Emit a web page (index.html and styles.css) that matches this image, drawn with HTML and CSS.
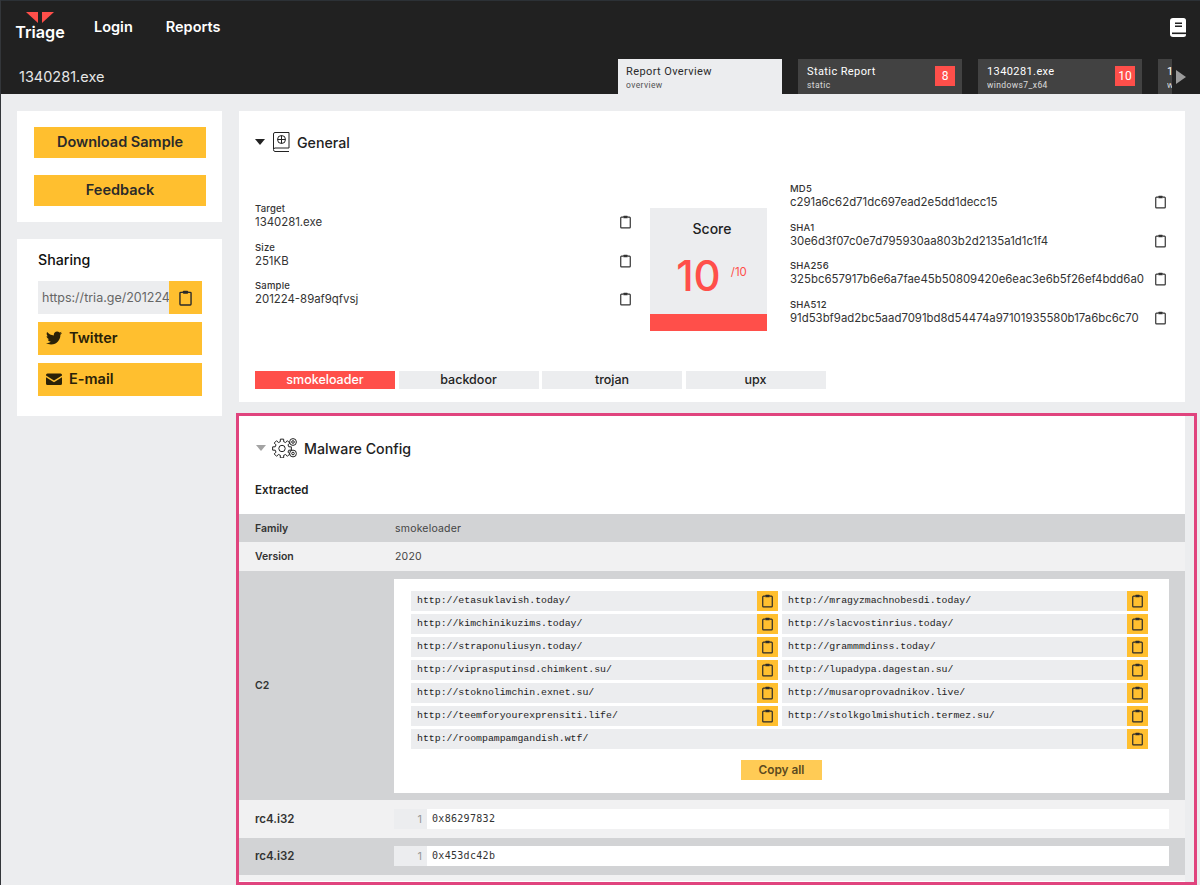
FILE: index.html
```html
<!doctype html>
<html lang="en">
    <head>
        <meta charset="UTF-8" />
        <meta name="viewport" content="width=device-width, initial-scale=1.0" />
        <title>1340281.exe - Triage</title>
        <link rel="stylesheet" href="styles.css">
    </head>
    <body>
        <svg class="icon-defs" width="0" height="0" aria-hidden="true">
            <symbol id="clip" viewBox="0 0 12 15">
                <path d="M3.6 2.2H1.6a.8.8 0 0 0-.8.8v10.2a.8.8 0 0 0 .8.8h8.8a.8.8 0 0 0 .8-.8V3a.8.8 0 0 0-.8-.8H8.4" fill="none" stroke="currentColor" stroke-width="1.3" />
                <rect x="3.6" y="0.6" width="4.8" height="2.9" rx="0.6" fill="currentColor" />
            </symbol>
        </svg>

        <header class="topbar">
            <div class="topbar-row">
                <a class="logo" href="#">
                    <svg class="logo-mark" width="28" height="11" viewBox="0 0 28 11">
                        <polygon points="0,0 12,0 12,11" fill="#ff4f4a" />
                        <polygon points="16,0 28,0 16,11" fill="#ff4f4a" />
                    </svg>
                    <span class="logo-text">Triage</span>
                </a>
                <a class="nav-link" href="#">Login</a>
                <a class="nav-link" href="#">Reports</a>
                <svg class="book-icon" width="16" height="19" viewBox="0 0 16 19">
                    <path d="M3 0h10.5A2.5 2.5 0 0 1 16 2.500V16.500A2.500 2.500 0 0 1 13.500 19H3A3 3 0 0 1 0 16V3A3 3 0 0 1 3 0z" fill="#fff" />
                    <rect x="5" y="4.500" width="7" height="1.500" fill="#212121" />
                    <rect x="5" y="7.500" width="7" height="1.500" fill="#212121" />
                    <rect x="2" y="14.500" width="14" height="1.600" fill="#212121" />
                </svg>
            </div>
            <div class="topbar-row tabs-row">
                <div class="file-name">1340281.exe</div>
                <div class="tabs">
                    <div class="tab active">
                        <div class="tab-title">Report Overview</div>
                        <div class="tab-sub">overview</div>
                    </div>
                    <div class="tab">
                        <div class="tab-title">Static Report</div>
                        <div class="tab-sub">static</div>
                        <span class="tab-badge">8</span>
                    </div>
                    <div class="tab">
                        <div class="tab-title">1340281.exe</div>
                        <div class="tab-sub">windows7_x64</div>
                        <span class="tab-badge">10</span>
                    </div>
                    <div class="tab">
                        <div class="tab-title">1340281.exe</div>
                        <div class="tab-sub">windows7_x64</div>
                    </div>
                </div>
                <div class="tabs-arrow"></div>
            </div>
        </header>

        <div class="page">
            <aside class="sidebar">
                <div class="card side-actions">
                    <button class="btn-yellow">Download Sample</button>
                    <button class="btn-yellow">Feedback</button>
                </div>
                <div class="card sharing">
                    <h3>Sharing</h3>
                    <div class="share-link">
                        <span class="share-url">https://tria.ge/201224-89af9qfvsj</span>
                        <span class="share-copy"><svg width="13" height="16"><use href="#clip" /></svg></span>
                    </div>
                    <a class="share-btn" href="#">
                        <svg width="16" height="16" viewBox="0 0 512 512"><path fill="currentColor" d="M459.37 151.716c.325 4.548.325 9.097.325 13.645 0 138.72-105.583 298.558-298.558 298.558-59.452 0-114.68-17.219-161.137-47.106 8.447.974 16.568 1.299 25.34 1.299 49.055 0 94.213-16.568 130.274-44.832-46.132-.975-84.792-31.188-98.112-72.772 6.498.974 12.995 1.624 19.818 1.624 9.421 0 18.843-1.3 27.614-3.573-48.081-9.747-84.143-51.98-84.143-102.985v-1.299c13.969 7.797 30.214 12.67 47.431 13.319-28.264-18.843-46.781-51.005-46.781-87.391 0-19.492 5.197-37.36 14.294-52.954 51.655 63.675 129.3 105.258 216.365 109.807-1.624-7.797-2.599-15.918-2.599-24.04 0-57.828 46.782-104.934 104.934-104.934 30.213 0 57.502 12.67 76.67 33.137 23.715-4.548 46.456-13.32 66.599-25.34-7.798 24.366-24.366 44.833-46.132 57.827 21.117-2.273 41.584-8.122 60.426-16.243-14.292 20.791-32.161 39.308-52.628 54.253z" /></svg>
                        Twitter
                    </a>
                    <a class="share-btn" href="#">
                        <svg width="16" height="16" viewBox="0 0 16 16"><path fill="currentColor" d="M1.500 2.500h13A1.500 1.500 0 0 1 16 4v.4L8 9.400 0 4.400V4a1.500 1.500 0 0 1 1.500-1.500zM0 6.200l8 5 8-5V12.500A1.500 1.500 0 0 1 14.500 14h-13A1.500 1.500 0 0 1 0 12.500z" /></svg>
                        E-mail
                    </a>
                </div>
            </aside>

            <main class="content">
                <section class="card general">
                    <div class="section-head">
                        <span class="caret"></span>
                        <svg class="section-icon" width="18" height="20" viewBox="0 0 18 20" fill="none" stroke="#222" stroke-width="1">
                            <path d="M1.500 17V2A1.500 1.500 0 0 1 3 .5h14v15.500H3A1.800 1.800 0 0 0 1.500 17.500 1.800 1.800 0 0 0 3 19.500h14" />
                            <circle cx="9.500" cy="7.500" r="4" />
                            <path d="M5.500 7.500h8M9.500 3.500v8" />
                        </svg>
                        <h2>General</h2>
                    </div>

                    <div class="overview">
                        <div class="info-col info-left">
                            <div class="info-item">
                                <div>
                                    <div class="info-label">Target</div>
                                    <div class="info-value">1340281.exe</div>
                                </div>
                                <svg class="clip-plain" width="11" height="14"><use href="#clip" /></svg>
                            </div>
                            <div class="info-item">
                                <div>
                                    <div class="info-label">Size</div>
                                    <div class="info-value">251KB</div>
                                </div>
                                <svg class="clip-plain" width="11" height="14"><use href="#clip" /></svg>
                            </div>
                            <div class="info-item">
                                <div>
                                    <div class="info-label">Sample</div>
                                    <div class="info-value">201224-89af9qfvsj</div>
                                </div>
                                <svg class="clip-plain" width="11" height="14"><use href="#clip" /></svg>
                            </div>
                        </div>

                        <div class="score">
                            <div class="score-title">Score</div>
                            <div class="score-value">10<small>/10</small></div>
                            <div class="score-bar"></div>
                        </div>

                        <div class="info-col info-right">
                            <div class="info-item">
                                <div>
                                    <div class="info-label">MD5</div>
                                    <div class="info-value">c291a6c62d71dc697ead2e5dd1decc15</div>
                                </div>
                                <svg class="clip-plain" width="11" height="14"><use href="#clip" /></svg>
                            </div>
                            <div class="info-item">
                                <div>
                                    <div class="info-label">SHA1</div>
                                    <div class="info-value">30e6d3f07c0e7d795930aa803b2d2135a1d1c1f4</div>
                                </div>
                                <svg class="clip-plain" width="11" height="14"><use href="#clip" /></svg>
                            </div>
                            <div class="info-item">
                                <div>
                                    <div class="info-label">SHA256</div>
                                    <div class="info-value">325bc657917b6e6a7fae45b50809420e6eac3e6b5f26ef4bdd6a0</div>
                                </div>
                                <svg class="clip-plain" width="11" height="14"><use href="#clip" /></svg>
                            </div>
                            <div class="info-item">
                                <div>
                                    <div class="info-label">SHA512</div>
                                    <div class="info-value">91d53bf9ad2bc5aad7091bd8d54474a97101935580b17a6bc6c70</div>
                                </div>
                                <svg class="clip-plain" width="11" height="14"><use href="#clip" /></svg>
                            </div>
                        </div>
                    </div>

                    <div class="tags">
                        <span class="tag tag-red">smokeloader</span>
                        <span class="tag">backdoor</span>
                        <span class="tag">trojan</span>
                        <span class="tag">upx</span>
                    </div>
                </section>

                <div class="highlight">
                    <section class="card config">
                        <div class="section-head config-head">
                            <span class="caret caret-muted"></span>
                            <svg class="section-icon" width="25" height="20" viewBox="0 0 25 20" fill="none" stroke="#222" stroke-width="1">
                                <g transform="translate(10 10.500)" stroke-linejoin="round">
                                    <path d="M6.790-1.690L9.360-1.650 9.360 1.650 6.790 1.690 6 3.610 7.780 5.450 5.450 7.780 3.610 6 1.690 6.790 1.650 9.360-1.650 9.360-1.690 6.790-3.610 6-5.450 7.780-7.780 5.450-6 3.610-6.790 1.690-9.360 1.650-9.360-1.650-6.790-1.690-6-3.610-7.780-5.450-5.450-7.780-3.610-6-1.690-6.790-1.650-9.360 1.650-9.360 1.690-6.790 3.610-6 5.450-7.780 7.780-5.450 6-3.610Z" />
                                    <circle r="3.200" />
                                </g>
                                <circle cx="21" cy="4" r="3.400" />
                                <circle cx="21" cy="4" r="1.300" />
                                <circle cx="21" cy="15.500" r="3.400" />
                                <circle cx="21" cy="15.500" r="1.300" />
                            </svg>
                            <h2>Malware Config</h2>
                        </div>
                        <h4 class="extracted">Extracted</h4>

                        <div class="cfg-row row-dark row-family">
                            <div class="cfg-label">Family</div>
                            <div class="cfg-text">smokeloader</div>
                        </div>
                        <div class="cfg-row row-light row-version">
                            <div class="cfg-label">Version</div>
                            <div class="cfg-text">2020</div>
                        </div>
                        <div class="cfg-row row-dark row-c2">
                            <div class="cfg-label">C2</div>
                            <div class="c2-box">
                                <div class="c2-grid">
                                    <div class="c2-item"><code>http://etasuklavish.today/</code><span class="c2-copy"><svg width="11" height="14"><use href="#clip" /></svg></span></div>
                                    <div class="c2-item"><code>http://mragyzmachnobesdi.today/</code><span class="c2-copy"><svg width="11" height="14"><use href="#clip" /></svg></span></div>
                                    <div class="c2-item"><code>http://kimchinikuzims.today/</code><span class="c2-copy"><svg width="11" height="14"><use href="#clip" /></svg></span></div>
                                    <div class="c2-item"><code>http://slacvostinrius.today/</code><span class="c2-copy"><svg width="11" height="14"><use href="#clip" /></svg></span></div>
                                    <div class="c2-item"><code>http://straponuliusyn.today/</code><span class="c2-copy"><svg width="11" height="14"><use href="#clip" /></svg></span></div>
                                    <div class="c2-item"><code>http://grammmdinss.today/</code><span class="c2-copy"><svg width="11" height="14"><use href="#clip" /></svg></span></div>
                                    <div class="c2-item"><code>http://viprasputinsd.chimkent.su/</code><span class="c2-copy"><svg width="11" height="14"><use href="#clip" /></svg></span></div>
                                    <div class="c2-item"><code>http://lupadypa.dagestan.su/</code><span class="c2-copy"><svg width="11" height="14"><use href="#clip" /></svg></span></div>
                                    <div class="c2-item"><code>http://stoknolimchin.exnet.su/</code><span class="c2-copy"><svg width="11" height="14"><use href="#clip" /></svg></span></div>
                                    <div class="c2-item"><code>http://musaroprovadnikov.live/</code><span class="c2-copy"><svg width="11" height="14"><use href="#clip" /></svg></span></div>
                                    <div class="c2-item"><code>http://teemforyourexprensiti.life/</code><span class="c2-copy"><svg width="11" height="14"><use href="#clip" /></svg></span></div>
                                    <div class="c2-item"><code>http://stolkgolmishutich.termez.su/</code><span class="c2-copy"><svg width="11" height="14"><use href="#clip" /></svg></span></div>
                                    <div class="c2-item c2-wide"><code>http://roompampamgandish.wtf/</code><span class="c2-copy"><svg width="11" height="14"><use href="#clip" /></svg></span></div>
                                </div>
                                <button class="copy-all">Copy all</button>
                            </div>
                        </div>
                        <div class="cfg-row row-light row-key">
                            <div class="cfg-label cfg-label-big">rc4.i32</div>
                            <div class="code-line"><span class="line-no">1</span><span class="line-code">0x86297832</span></div>
                        </div>
                        <div class="cfg-row row-dark row-key">
                            <div class="cfg-label cfg-label-big">rc4.i32</div>
                            <div class="code-line"><span class="line-no">1</span><span class="line-code">0x453dc42b</span></div>
                        </div>
                        <div class="cfg-end"></div>
                    </section>
                </div>
            </main>
        </div>
    </body>
</html>
```

FILE: styles.css
```css
html, body {
    height: 885px;
    overflow: hidden;
}

body {
    margin: 0;
    font-family: "Inter", "Liberation Sans", sans-serif;
    background: #ecedef;
    color: #222;
    border-left: 1px solid #33363a;
}

.icon-defs {
    display: block;
}

h2, h3, h4 {
    margin: 0;
}

a {
    text-decoration: none;
    color: inherit;
}

button {
    font-family: inherit;
    border: none;
    cursor: pointer;
}

/* top bar */
.topbar {
    height: 93px;
    background: #212121;
    border-top: 1px solid #2c3136;
    color: white;
}

.topbar-row {
    display: flex;
    align-items: center;
    height: 58px;
    padding-left: 14px;
    padding-right: 14px;
}

.logo {
    display: flex;
    flex-direction: column;
    align-items: center;
    width: 50px;
    margin-top: -8px;
    margin-right: 29px;
}

.logo-text {
    font-size: 16.200px;
    font-weight: 600;
    line-height: 17px;
    margin-top: 1px;
}

.nav-link {
    font-size: 14.500px;
    font-weight: 600;
    margin-right: 33px;
    margin-top: -8px;
}

.book-icon {
    margin-left: auto;
    margin-top: -5px;
}

.tabs-row {
    height: 35px;
    padding-left: 18px;
    padding-right: 12px;
}

.file-name {
    font-size: 14.500px;
    color: #e6e6e6;
    width: 599px;
}

.tabs {
    display: flex;
    gap: 16px;
    width: 554px;
    height: 35px;
    overflow: hidden;
}

.tab {
    flex: 0 0 164px;
    position: relative;
    background: #424242;
    padding: 6px 9px 0;
    box-sizing: border-box;
}

.tab.active {
    background: #ecedef;
    color: #2b2b2b;
    padding-left: 8px;
}

.tab-title {
    font-family: "Roboto", sans-serif;
    font-size: 11px;
    letter-spacing: 0.4px;
    line-height: 13px;
}

.tab-sub {
    font-family: "Roboto", sans-serif;
    font-size: 8.500px;
    letter-spacing: 0.4px;
    line-height: 11px;
    margin-top: 2px;
    opacity: 0.8;
}

.tab-badge {
    position: absolute;
    top: 7px;
    right: 7px;
    width: 20px;
    height: 20px;
    background: #ff4f4a;
    font-family: "Roboto", sans-serif;
    font-size: 12px;
    line-height: 20px;
    text-align: center;
}

.tabs-arrow {
    width: 0;
    height: 0;
    margin-left: 4px;
    border-left: 10px solid #9b9b9b;
    border-top: 7.500px solid transparent;
    border-bottom: 7.500px solid transparent;
}

/* page layout */
.page {
    display: flex;
    align-items: flex-start;
    padding: 17px 0 0 16px;
    gap: 17px;
}

.card {
    background: white;
}

.sidebar {
    flex: 0 0 205px;
    min-width: 0;
    display: flex;
    flex-direction: column;
    gap: 17px;
}

.side-actions {
    display: flex;
    flex-direction: column;
    gap: 17px;
    padding: 16px 16px 16px 17px;
}

.btn-yellow {
    height: 31px;
    padding: 0 0 2px;
    background: #ffbf2f;
    color: #2a2a2a;
    font-size: 14.500px;
    font-weight: 600;
}

.sharing {
    height: 177px;
    padding: 12px 20px 0 21px;
    box-sizing: border-box;
}

.sharing h3 {
    font-size: 14.200px;
    font-weight: 500;
    color: #111;
    line-height: 18px;
    margin-bottom: 12px;
}

.share-link {
    display: flex;
    height: 33px;
    background: #ecedef;
    margin-bottom: 8px;
}

.share-url {
    flex: 1;
    min-width: 0;
    overflow: hidden;
    white-space: nowrap;
    font-size: 12.500px;
    line-height: 33px;
    padding-left: 4px;
    color: #666;
}

.share-copy {
    flex: 0 0 33px;
    display: flex;
    align-items: center;
    justify-content: center;
    background: #ffbf2f;
    color: #2a2a2a;
}

.share-btn {
    display: flex;
    align-items: center;
    gap: 7px;
    height: 33px;
    padding: 0 0 2px 8px;
    box-sizing: border-box;
    margin-bottom: 8px;
    background: #ffbf2f;
    color: #2a2108;
    font-size: 14.500px;
    font-weight: 600;
}

.content {
    flex: 0 0 946px;
}

/* section heads */
.section-head {
    display: flex;
    align-items: center;
    height: 20px;
}

.section-head h2 {
    font-size: 14.200px;
    font-weight: 500;
    color: #222;
}

.caret {
    width: 0;
    height: 0;
    margin-right: 7px;
    border-top: 6px solid #222;
    border-left: 5px solid transparent;
    border-right: 5px solid transparent;
}

.caret-muted {
    border-top-color: #a3a3a3;
    margin-right: 6px;
}

.section-icon {
    margin-right: 7px;
}

/* general */
.general {
    height: 291px;
    padding: 21px 19px 0 16px;
    box-sizing: border-box;
}

.overview {
    display: flex;
    align-items: flex-start;
    margin-top: 27px;
    height: 192px;
}

.info-col {
    display: flex;
    flex-direction: column;
}

.info-left {
    width: 376px;
    padding-top: 24px;
    gap: 12.500px;
}

.info-right {
    width: 376px;
    margin-left: 23px;
    padding-top: 4px;
    gap: 12.500px;
}

.info-item {
    display: flex;
    justify-content: space-between;
    align-items: flex-end;
    height: 26px;
}

.info-label {
    font-size: 9.500px;
    font-weight: 500;
    letter-spacing: 0.2px;
    line-height: 14px;
    color: #333;
}

.info-value {
    font-size: 11.400px;
    line-height: 13px;
    color: #333;
    white-space: nowrap;
}

.clip-plain {
    color: #333;
}

.score {
    flex: 0 0 117px;
    display: flex;
    flex-direction: column;
    align-items: center;
    height: 123px;
    margin-left: 19px;
    margin-top: 29px;
    background: #ecedef;
}

.score-title {
    font-size: 14px;
    font-weight: 500;
    margin-top: 12px;
    padding-left: 7px;
    line-height: 17px;
}

.score-value {
    flex: 1;
    font-size: 42px;
    font-weight: 500;
    line-height: 50px;
    margin-top: 10px;
    padding-left: 6px;
    color: #ff4f4a;
}

.score-value small {
    font-size: 11.500px;
    font-weight: 400;
    vertical-align: 15px;
    margin-left: 10px;
}

.score-bar {
    align-self: stretch;
    height: 17px;
    background: #ff4f4a;
}

.tags {
    display: flex;
    gap: 3.500px;
}

.tag {
    width: 140px;
    height: 18px;
    background: #ecedef;
    font-size: 12.500px;
    font-weight: 500;
    line-height: 18px;
    text-align: center;
    color: #222;
}

.tag-red {
    background: #ff4f4a;
    color: white;
}

/* highlighted config block */
.highlight {
    margin: 11px -12px 0 -3px;
    height: 472px;
    border: 3px solid #e0447e;
    padding-right: 8px;
    box-sizing: border-box;
    background: #ecedef;
}

.config {
    height: 100%;
    width: 946px;
}

.config-head {
    padding: 22px 0 0 17px;
}

.extracted {
    font-size: 11.500px;
    font-weight: 600;
    line-height: 14px;
    padding: 25px 0 0 16px;
    color: #222;
}

.cfg-row {
    display: flex;
    align-items: center;
    box-sizing: border-box;
    padding-left: 16px;
}

.row-dark {
    background: #d2d3d5;
}

.row-light {
    background: #f1f1f2;
}

.row-family {
    height: 28px;
    margin-top: 17px;
}

.row-version {
    height: 29px;
}

.row-c2 {
    height: 229px;
}

.row-key {
    height: 37.500px;
}

.cfg-label {
    flex: 0 0 139px;
    font-size: 10.500px;
    font-weight: 600;
    color: #333;
}

.cfg-label-big {
    font-size: 11.500px;
}

.cfg-text {
    font-size: 10.500px;
    letter-spacing: 0.2px;
    color: #444;
    padding-left: 1px;
}

.c2-box {
    flex: 0 0 775px;
    height: 214px;
    background: white;
    padding: 12px 21px 0 17px;
    box-sizing: border-box;
    display: flex;
    flex-direction: column;
    align-items: center;
}

.c2-grid {
    display: grid;
    grid-template-columns: 367px 366px;
    column-gap: 4px;
    row-gap: 3px;
    align-self: stretch;
}

.c2-item {
    display: flex;
    height: 20px;
    background: #ecedef;
}

.c2-wide {
    grid-column: 1 / 3;
}

.c2-item code {
    flex: 1;
    font-family: "Liberation Mono", monospace;
    font-size: 9.850px;
    line-height: 20px;
    padding-left: 6px;
    color: #222;
}

.c2-copy {
    flex: 0 0 21px;
    display: flex;
    align-items: center;
    justify-content: center;
    background: #ffbf2f;
    color: #2a2a2a;
}

.copy-all {
    width: 81px;
    height: 20px;
    margin-top: 11px;
    margin-left: 4px;
    padding: 0;
    background: #ffcb55;
    color: #5c4a20;
    font-size: 11.800px;
    font-weight: 600;
}

.code-line {
    flex: 0 0 775px;
    display: flex;
    height: 20px;
    background: white;
}

.line-no {
    flex: 0 0 33px;
    box-sizing: border-box;
    background: #ecedef;
    text-align: right;
    padding-right: 5px;
    font-size: 11px;
    line-height: 20px;
    color: #999;
}

.line-code {
    font-family: "DejaVu Sans Mono", monospace;
    font-size: 10px;
    letter-spacing: 0.3px;
    line-height: 20px;
    padding-left: 5px;
    color: #333;
}

.cfg-end {
    height: 6px;
    background: #f1f1f2;
}
```
